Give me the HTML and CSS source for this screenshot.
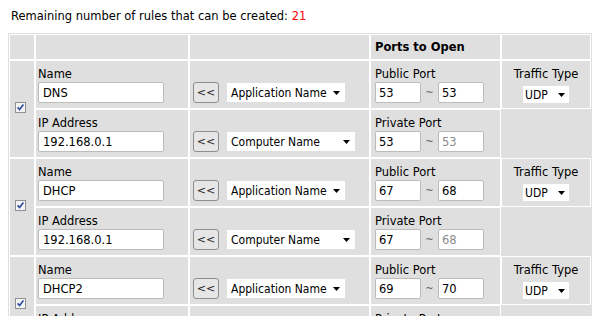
FILE: index.html
```html
<!DOCTYPE html>
<html lang="en">
  <head>
    <meta charset="UTF-8" />
    <title>Port Forwarding Rules</title>
    <link rel="stylesheet" href="styles.css">
  </head>
  <body>
    <p class="remain">Remaining number of rules that can be created: <span class="count">21</span></p>

    <table class="rules">
      <tr class="head">
        <td class="c-check"></td>
        <td class="c-name"></td>
        <td class="c-app"></td>
        <td class="c-ports"><b>Ports to Open</b></td>
        <td class="c-type"></td>
      </tr>

      <!-- Rule 1 -->
      <tr>
        <td class="c-check" rowspan="2">
          <svg class="check" width="11" height="11" viewBox="0 0 11 11"><rect x="0.5" y="0.5" width="10" height="10" fill="#f3f3f3" stroke="#8d9097"/><path d="M2.6 5.4 L4.6 7.6 L8.4 2.6" fill="none" stroke="#2a4a9e" stroke-width="1.6"/></svg>
        </td>
        <td class="c-name">
          <div class="label">Name</div>
          <input class="text" type="text" value="DNS">
        </td>
        <td class="c-app">
          <div class="label">&nbsp;</div>
          <div class="pick">
            <button class="copy">&lt;&lt;</button>
            <div class="select app">Application Name<svg width="7" height="4" viewBox="0 0 7 4"><polygon points="0,0 7,0 3.5,4"/></svg></div>
          </div>
        </td>
        <td class="c-ports">
          <div class="label">Public Port</div>
          <div class="range"><input class="port" type="text" value="53"><span class="tilde">~</span><input class="port" type="text" value="53"></div>
        </td>
        <td class="c-type">
          <div class="label">Traffic Type</div>
          <div class="select proto">UDP<svg width="7" height="4" viewBox="0 0 7 4"><polygon points="0,0 7,0 3.5,4"/></svg></div>
        </td>
      </tr>
      <tr>
        <td class="c-name">
          <div class="label">IP Address</div>
          <input class="text" type="text" value="192.168.0.1">
        </td>
        <td class="c-app">
          <div class="label">&nbsp;</div>
          <div class="pick">
            <button class="copy">&lt;&lt;</button>
            <div class="select computer">Computer Name<svg width="7" height="4" viewBox="0 0 7 4"><polygon points="0,0 7,0 3.5,4"/></svg></div>
          </div>
        </td>
        <td class="c-ports">
          <div class="label">Private Port</div>
          <div class="range"><input class="port" type="text" value="53"><span class="tilde">~</span><input class="port" type="text" value="53" disabled></div>
        </td>
      </tr>

      <!-- Rule 2 -->
      <tr>
        <td class="c-check" rowspan="2">
          <svg class="check" width="11" height="11" viewBox="0 0 11 11"><rect x="0.5" y="0.5" width="10" height="10" fill="#f3f3f3" stroke="#8d9097"/><path d="M2.6 5.4 L4.6 7.6 L8.4 2.6" fill="none" stroke="#2a4a9e" stroke-width="1.6"/></svg>
        </td>
        <td class="c-name">
          <div class="label">Name</div>
          <input class="text" type="text" value="DHCP">
        </td>
        <td class="c-app">
          <div class="label">&nbsp;</div>
          <div class="pick">
            <button class="copy">&lt;&lt;</button>
            <div class="select app">Application Name<svg width="7" height="4" viewBox="0 0 7 4"><polygon points="0,0 7,0 3.5,4"/></svg></div>
          </div>
        </td>
        <td class="c-ports">
          <div class="label">Public Port</div>
          <div class="range"><input class="port" type="text" value="67"><span class="tilde">~</span><input class="port" type="text" value="68"></div>
        </td>
        <td class="c-type">
          <div class="label">Traffic Type</div>
          <div class="select proto">UDP<svg width="7" height="4" viewBox="0 0 7 4"><polygon points="0,0 7,0 3.5,4"/></svg></div>
        </td>
      </tr>
      <tr>
        <td class="c-name">
          <div class="label">IP Address</div>
          <input class="text" type="text" value="192.168.0.1">
        </td>
        <td class="c-app">
          <div class="label">&nbsp;</div>
          <div class="pick">
            <button class="copy">&lt;&lt;</button>
            <div class="select computer">Computer Name<svg width="7" height="4" viewBox="0 0 7 4"><polygon points="0,0 7,0 3.5,4"/></svg></div>
          </div>
        </td>
        <td class="c-ports">
          <div class="label">Private Port</div>
          <div class="range"><input class="port" type="text" value="67"><span class="tilde">~</span><input class="port" type="text" value="68" disabled></div>
        </td>
      </tr>

      <!-- Rule 3 -->
      <tr>
        <td class="c-check" rowspan="2">
          <svg class="check" width="11" height="11" viewBox="0 0 11 11"><rect x="0.5" y="0.5" width="10" height="10" fill="#f3f3f3" stroke="#8d9097"/><path d="M2.6 5.4 L4.6 7.6 L8.4 2.6" fill="none" stroke="#2a4a9e" stroke-width="1.6"/></svg>
        </td>
        <td class="c-name">
          <div class="label">Name</div>
          <input class="text" type="text" value="DHCP2">
        </td>
        <td class="c-app">
          <div class="label">&nbsp;</div>
          <div class="pick">
            <button class="copy">&lt;&lt;</button>
            <div class="select app">Application Name<svg width="7" height="4" viewBox="0 0 7 4"><polygon points="0,0 7,0 3.5,4"/></svg></div>
          </div>
        </td>
        <td class="c-ports">
          <div class="label">Public Port</div>
          <div class="range"><input class="port" type="text" value="69"><span class="tilde">~</span><input class="port" type="text" value="70"></div>
        </td>
        <td class="c-type">
          <div class="label">Traffic Type</div>
          <div class="select proto">UDP<svg width="7" height="4" viewBox="0 0 7 4"><polygon points="0,0 7,0 3.5,4"/></svg></div>
        </td>
      </tr>
      <tr>
        <td class="c-name">
          <div class="label">IP Address</div>
          <input class="text" type="text" value="192.168.0.1">
        </td>
        <td class="c-app">
          <div class="label">&nbsp;</div>
          <div class="pick">
            <button class="copy">&lt;&lt;</button>
            <div class="select computer">Computer Name<svg width="7" height="4" viewBox="0 0 7 4"><polygon points="0,0 7,0 3.5,4"/></svg></div>
          </div>
        </td>
        <td class="c-ports">
          <div class="label">Private Port</div>
          <div class="range"><input class="port" type="text" value="69"><span class="tilde">~</span><input class="port" type="text" value="70" disabled></div>
        </td>
      </tr>
    </table>
  </body>
</html>
```

FILE: styles.css
```css
body {
  margin: 8px;
  font-family: "DejaVu Sans", Verdana, sans-serif;
  font-size: 11.5px;
  color: #000;
  background-color: #fff;
}

.remain {
  margin: 0 0 9px;
  padding-left: 3px;
  line-height: 16px;
}

.count {
  color: #ff0000;
}

/* Rules table */
.rules {
  table-layout: fixed;
  border-collapse: separate;
  border-spacing: 0;
  border: 1px solid #dfdfdf;
  background-color: #dfdfdf;
}

.rules td {
  border: 1px solid #fff;
  padding: 0;
  height: 47px;
  vertical-align: middle;
}

.rules .head td {
  height: 24px;
  line-height: 24px;
}

.c-check {
  width: 24px;
}

.check {
  display: block;
  margin: 0 0 3px 5px;
}

.c-name {
  width: 150px;
}

.rules td.c-name {
  padding-left: 2px;
}

.c-app {
  width: 176px;
}

.rules td.c-app {
  padding-left: 3px;
}

.c-ports {
  width: 125px;
}

.rules td.c-ports {
  padding-left: 4px;
}

.c-type {
  width: 88px;
  text-align: center;
}

.label {
  line-height: 16px;
}

input {
  font-family: inherit;
  font-size: 11.5px;
  color: #000;
  box-sizing: border-box;
  height: 21px;
  margin: 0;
  padding: 0 3px;
  border: 1px solid #bcbcbc;
  border-radius: 2px;
  background-color: #fff;
  display: block;
}

input:disabled {
  color: #8c8c8c;
}

.text {
  width: 126px;
  padding-left: 4px;
}

.range {
  display: flex;
  align-items: center;
}

.port {
  width: 46px;
}

.tilde {
  width: 17px;
  text-align: center;
  color: #666;
  font-size: 10px;
}

.pick {
  display: flex;
  align-items: center;
  gap: 8px;
  height: 21px;
}

.copy {
  width: 26px;
  height: 21px;
  padding: 0;
  font-family: inherit;
  font-size: 11px;
  color: #222;
  background-color: #e6e6e6;
  border: 1px solid #8e8e8e;
  border-radius: 3px;
}

.select {
  display: inline-flex;
  align-items: center;
  justify-content: space-between;
  box-sizing: border-box;
  height: 19px;
  padding: 0 5px 0 4px;
  font-family: "DejaVu Sans Condensed", "DejaVu Sans", sans-serif;
  font-stretch: condensed;
  font-size: 12px;
  background-color: #fff;
  white-space: nowrap;
}

.select.app {
  width: 118px;
}

.select.computer {
  width: 128px;
}

.select.proto {
  width: 46px;
  height: 17px;
  margin-top: 4px;
  padding: 0 4px 0 2px;
}
```
